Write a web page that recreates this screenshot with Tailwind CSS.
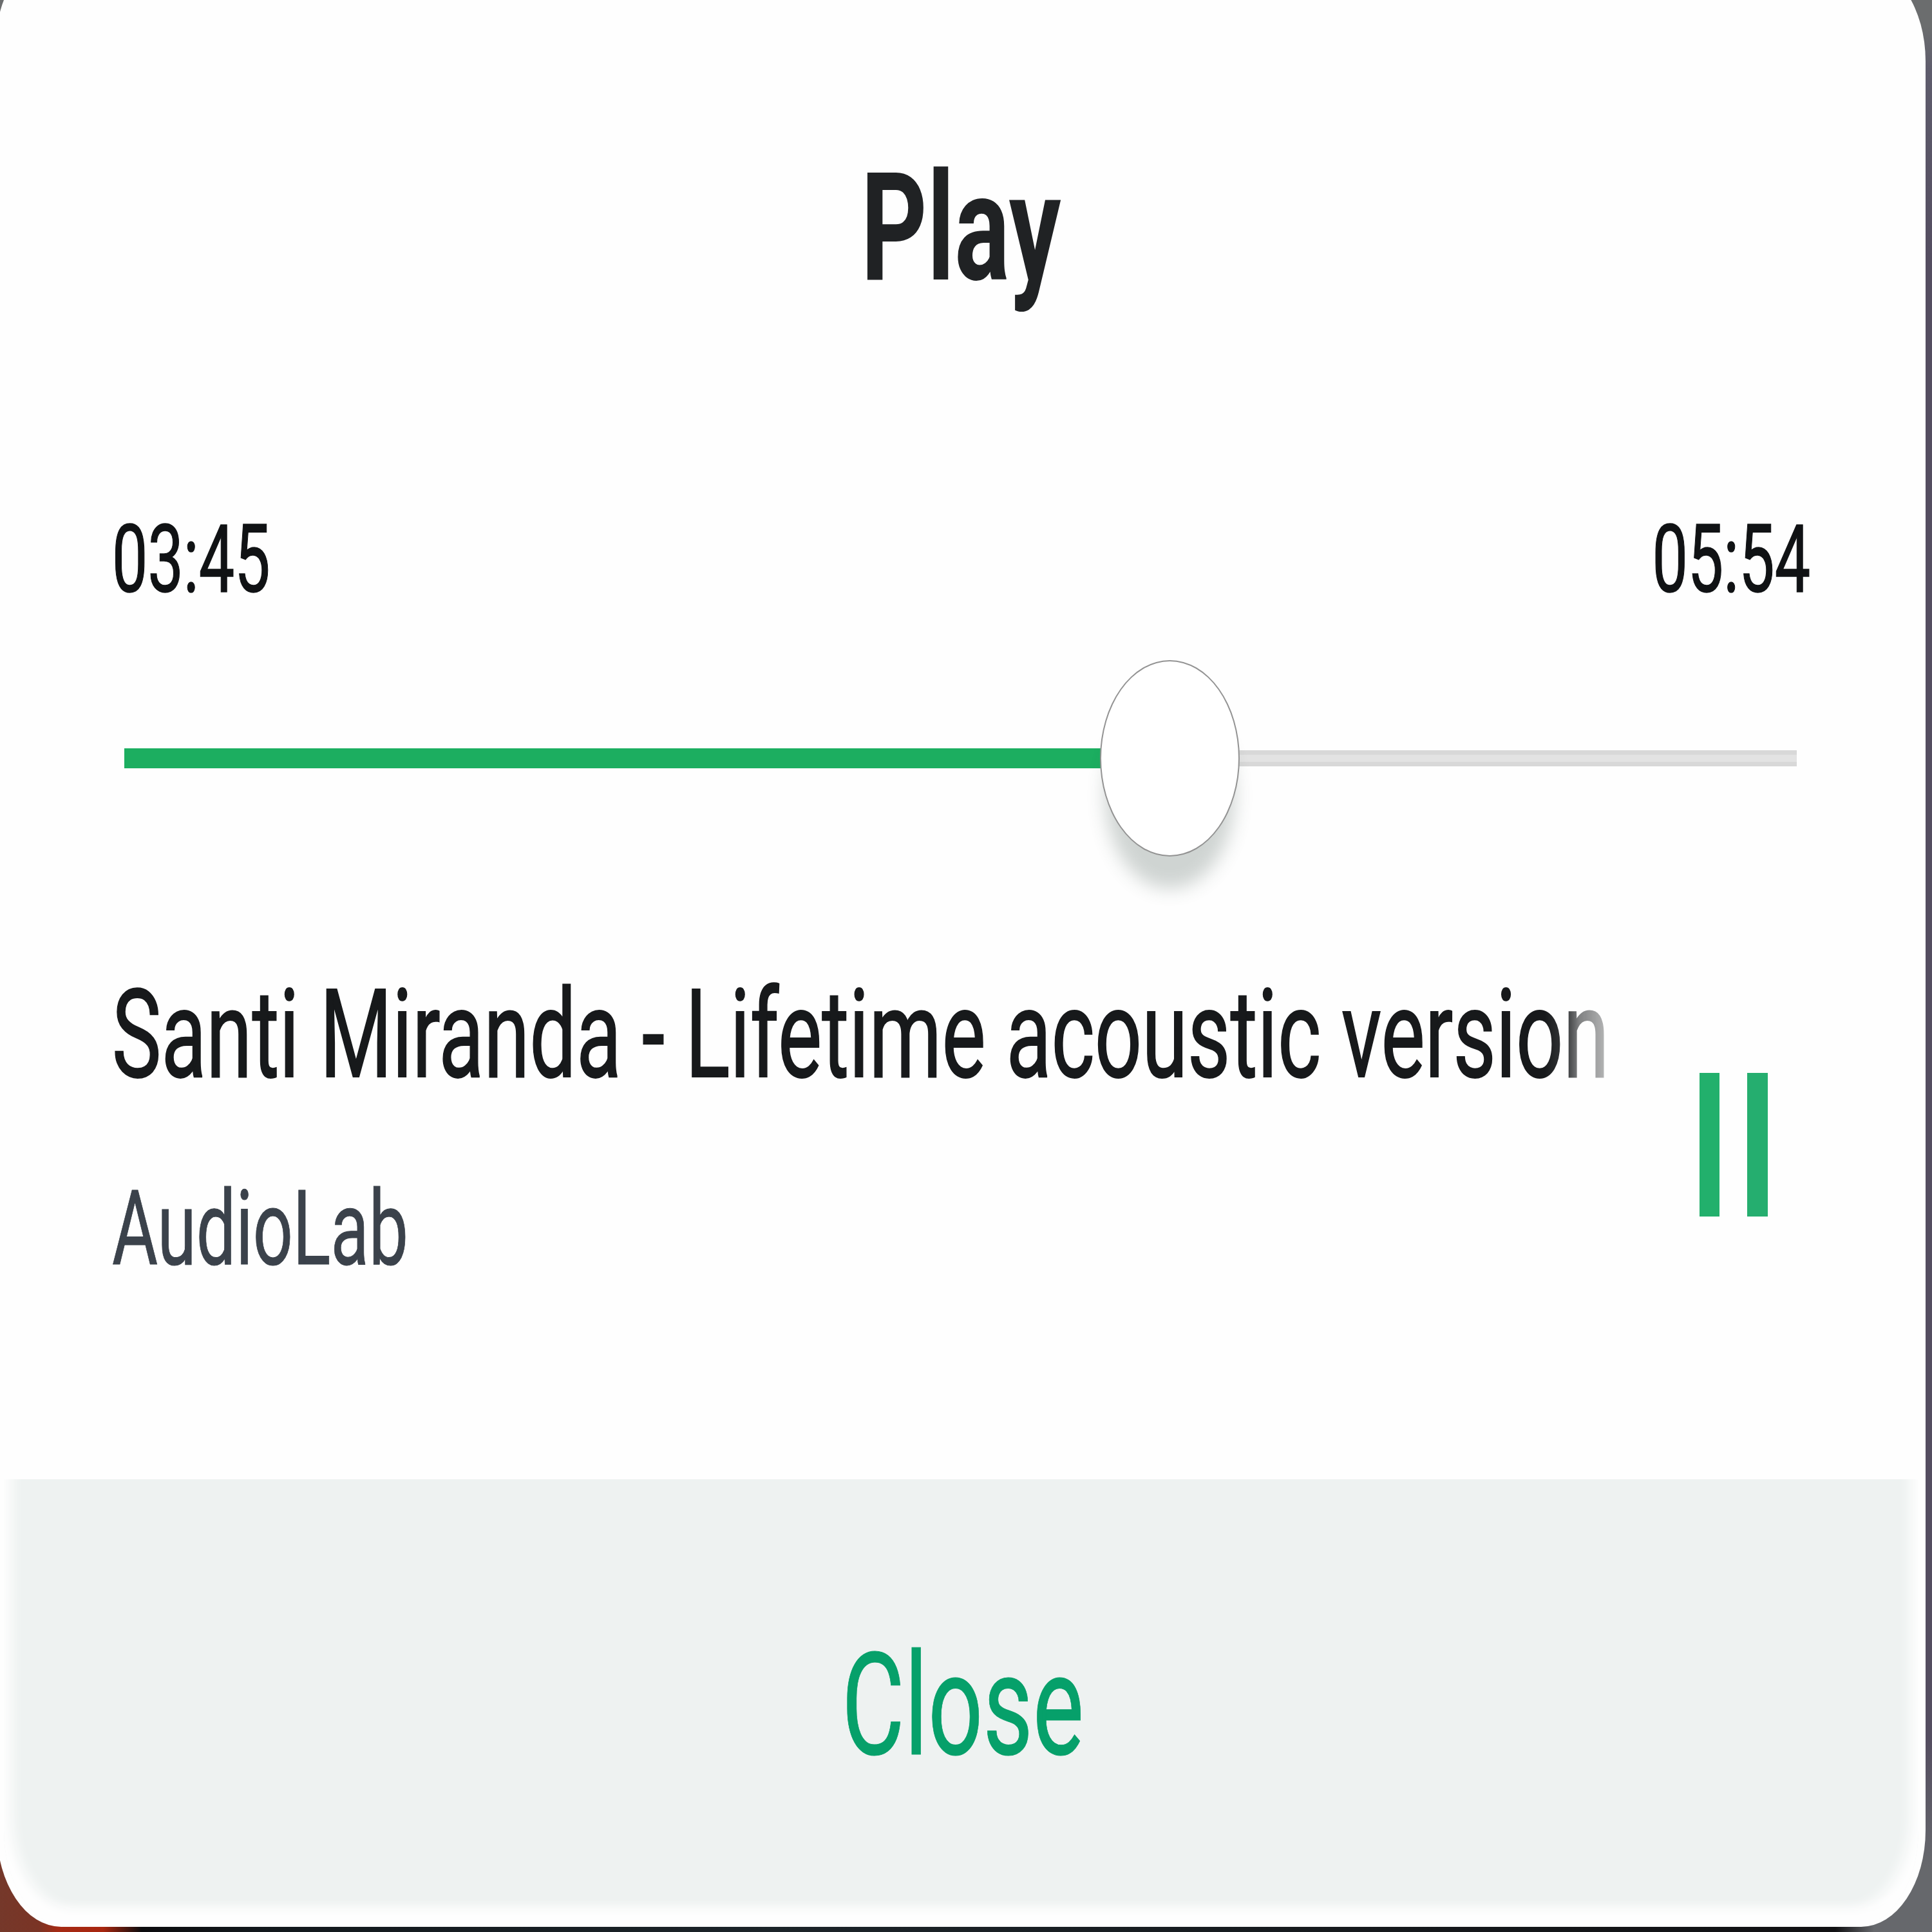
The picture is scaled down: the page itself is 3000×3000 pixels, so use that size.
<!DOCTYPE html>
<html lang="en">
  <head>
    <meta charset="UTF-8" />
    <meta name="viewport" content="width=device-width, initial-scale=1.0" />
    <title>Play</title>
    <script src="https://cdn.jsdelivr.net/npm/@tailwindcss/browser@4"></script>
  </head>
  <body
    class="w-[3000px] h-[3000px] overflow-hidden font-['Roboto',sans-serif] bg-[linear-gradient(to_bottom,#6b6d6e_0,#6b6d6e_40px,#5e5c6c_110px,#544d60_400px,#544d60_2700px,#66686c_2900px)]"
  >
    <!-- what shows of the screen behind the dialog -->
    <div
      class="absolute left-0 bottom-0 w-[2910px] h-[140px] bg-[linear-gradient(to_right,#75382a_0,#7a3425_60px,#a52a14_90px,#a8260f_160px,#0c0c0e_220px,#12181c_400px,#1c2429_1200px,#111113_2850px,#66686c_2910px)]"
    ></div>
    <div
      class="relative -mt-[55px] -ml-[5px] w-[2995px] h-[3047px] flex flex-col overflow-hidden bg-[#fefefe] rounded-[100px/150px] rounded-tl-[75px_115px]"
    >
      <h1
        class="mt-[292px] mr-[1px] text-center text-[234px] leading-none font-bold text-[#202224] scale-x-[0.684]"
      >
        Play
      </h1>
      <div
        class="mt-[325px] pl-[179px] pr-[179px] flex justify-between text-[147px] leading-none text-[#101214] [-webkit-text-stroke:1.5px]"
      >
        <span class="origin-left scale-x-[0.671]">03:45</span>
        <span class="origin-right scale-x-[0.671]">05:54</span>
      </div>
      <div class="mt-[82px] pl-[198px] pr-[200px] h-[305px] flex items-center">
        <div class="w-[1517px] h-[31px] shrink-0 bg-[#1cae60]"></div>
        <div
          class="relative z-10 -mx-[2px] w-[217px] h-[305px] shrink-0 rounded-[50%] bg-white border-2 border-[#939393] shadow-[0_58px_28px_-8px_rgba(60,80,72,0.24)]"
        ></div>
        <div
          class="grow h-[25px] bg-[#e3e3e3] border-y-[7px] border-[#d8d8d8]"
        ></div>
      </div>
      <div class="mt-[181px] pl-[179px] flex">
        <div class="w-[2326px] shrink-0">
          <p
            class="w-[3466px] whitespace-nowrap origin-left scale-x-[0.67] text-[192px] leading-none text-[#17191b] [-webkit-text-stroke:2px] [mask-image:linear-gradient(to_right,#000_0,#000_3320px,rgba(0,0,0,0.85)_3372px,rgba(0,0,0,0.55)_3400px,rgba(0,0,0,0.3)_3466px)]"
          >
            Santi Miranda - Lifetime acoustic version
          </p>
          <p
            class="mt-[124px] origin-left scale-x-[0.673] text-[162px] leading-none text-[#3b424b] [-webkit-text-stroke:1px]"
          >
            AudioLab
          </p>
        </div>
        <button class="ml-[139px] mt-[155px] flex gap-[43px] h-[223px]">
          <span class="w-[31px] h-full bg-[#22b06c]"></span>
          <span class="w-[32px] h-full bg-[#25ae6f]"></span>
        </button>
      </div>
      <button
        class="mt-[308px] mx-auto w-[2973px] grow pt-[242px] flex items-start justify-center bg-[#eef2f1] shadow-[inset_12px_-26px_20px_#fefefe,inset_-12px_-26px_20px_#fefefe] rounded-b-[100px_150px]"
      >
        <span
          class="ml-[5px] text-[220px] leading-none text-[#06a06a] scale-x-[0.681] [-webkit-text-stroke:1px]"
          >Close</span
        >
      </button>
    </div>
  </body>
</html>
